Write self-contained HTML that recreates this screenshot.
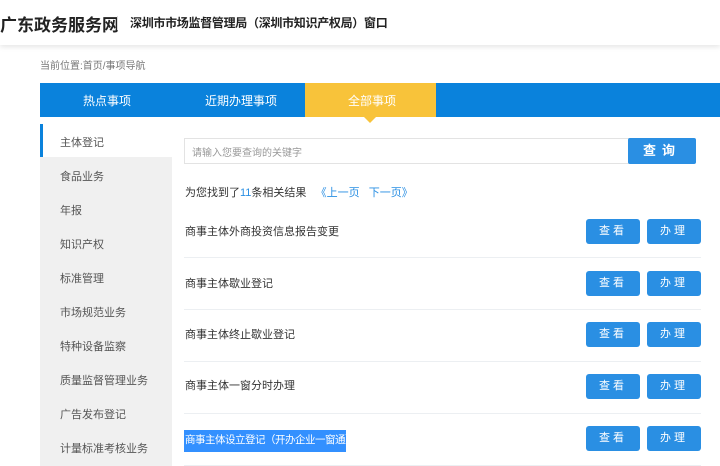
<!DOCTYPE html>
<html><head><meta charset="utf-8"><style>
*{margin:0;padding:0;box-sizing:border-box}
body{width:720px;height:466px;overflow:hidden;background:#fff;font-family:"Liberation Sans","Noto Sans CJK SC",sans-serif;position:relative}
.a{position:absolute;white-space:nowrap}
.hdr{left:0;top:0;width:720px;height:45px;background:#fff;box-shadow:0 2px 5px rgba(0,0,0,.1)}
.nav{left:40px;top:83px;width:680px;height:34px;background:#0a82dc}
.tab{color:#fff;font-size:12px;top:92px}
.side{left:40px;top:157px;width:132px;height:309px;background:#f0f0f0}
.si{left:60px;font-size:11px;color:#555}
.row{left:185px;font-size:11px;color:#333}
.btn{width:54px;height:25px;background:#2a8fe3;border-radius:3px;color:#fff;font-size:11px;text-align:center;line-height:25px;letter-spacing:3px}
.sep{left:184px;width:517px;height:1px;background:#eceff2}
</style></head><body>
<div class="a hdr"></div>
<div class="a" style="left:0;top:11px;font-size:17px;font-weight:bold;color:#222">广东政务服务网</div>
<div class="a" style="left:117px;top:16px;width:1px;height:14px;background:#ddd"></div>
<div class="a" style="left:130px;top:14px;font-size:12px;font-weight:bold;color:#222;letter-spacing:-0.3px">深圳市市场监督管理局（深圳市知识产权局）窗口</div>
<div class="a" style="left:40px;top:57px;font-size:10px;color:#777">当前位置:首页/事项导航</div>
<div class="a nav"></div>
<div class="a" style="left:305px;top:83px;width:131px;height:34px;background:#f8c33a"></div>
<div class="a" style="left:364px;top:117px;width:0;height:0;border-left:6px solid transparent;border-right:6px solid transparent;border-top:6px solid #f8c33a"></div>
<div class="a tab" style="left:83px">热点事项</div>
<div class="a tab" style="left:205px">近期办理事项</div>
<div class="a tab" style="left:348px">全部事项</div>
<div class="a side"></div>
<div class="a" style="left:40px;top:124px;width:3px;height:33px;background:#0a82dc"></div>
<div class="a si" style="top:134px">主体登记</div>
<div class="a si" style="top:168px">食品业务</div>
<div class="a si" style="top:202px">年报</div>
<div class="a si" style="top:236px">知识产权</div>
<div class="a si" style="top:270px">标准管理</div>
<div class="a si" style="top:304px">市场规范业务</div>
<div class="a si" style="top:338px">特种设备监察</div>
<div class="a si" style="top:372px">质量监督管理业务</div>
<div class="a si" style="top:406px">广告发布登记</div>
<div class="a si" style="top:440px">计量标准考核业务</div>
<div class="a" style="left:184px;top:138px;width:446px;height:26px;border:1px solid #e3e3e3"></div>
<div class="a" style="left:192px;top:144px;font-size:10px;color:#999">请输入您要查询的关键字</div>
<div class="a" style="left:628px;top:138px;width:68px;height:26px;background:#2a8fe3;border-radius:2px;color:#fff;font-size:13px;font-weight:bold;text-align:center;line-height:26px;letter-spacing:6px">查询</div>
<div class="a" style="left:185px;top:184px;font-size:11px;color:#333">为您找到了<span style="color:#2a8fe3">11</span>条相关结果 &nbsp;&nbsp;<span style="color:#2a8fe3">《上一页 &nbsp;&nbsp;下一页》</span></div>
<div class="a row" style="top:223px">商事主体外商投资信息报告变更</div>
<div class="a row" style="top:275px">商事主体歇业登记</div>
<div class="a row" style="top:326px">商事主体终止歇业登记</div>
<div class="a row" style="top:377px">商事主体一窗分时办理</div>
<div class="a row" style="left:184px;top:430px;height:22px;line-height:20px;background:#3390ff;color:#fff;font-size:10.5px;letter-spacing:-0.5px;padding:0 1px;width:162px;overflow:hidden">商事主体设立登记（开办企业一窗通）</div>
<div class="a sep" style="top:257px"></div>
<div class="a sep" style="top:309px"></div>
<div class="a sep" style="top:361px"></div>
<div class="a sep" style="top:413px"></div>
<div class="a sep" style="top:465px"></div>
<div class="a btn" style="left:586px;top:219px">查看</div><div class="a btn" style="left:647px;top:219px">办理</div>
<div class="a btn" style="left:586px;top:271px">查看</div><div class="a btn" style="left:647px;top:271px">办理</div>
<div class="a btn" style="left:586px;top:322px">查看</div><div class="a btn" style="left:647px;top:322px">办理</div>
<div class="a btn" style="left:586px;top:374px">查看</div><div class="a btn" style="left:647px;top:374px">办理</div>
<div class="a btn" style="left:586px;top:426px">查看</div><div class="a btn" style="left:647px;top:426px">办理</div>
</body></html>
